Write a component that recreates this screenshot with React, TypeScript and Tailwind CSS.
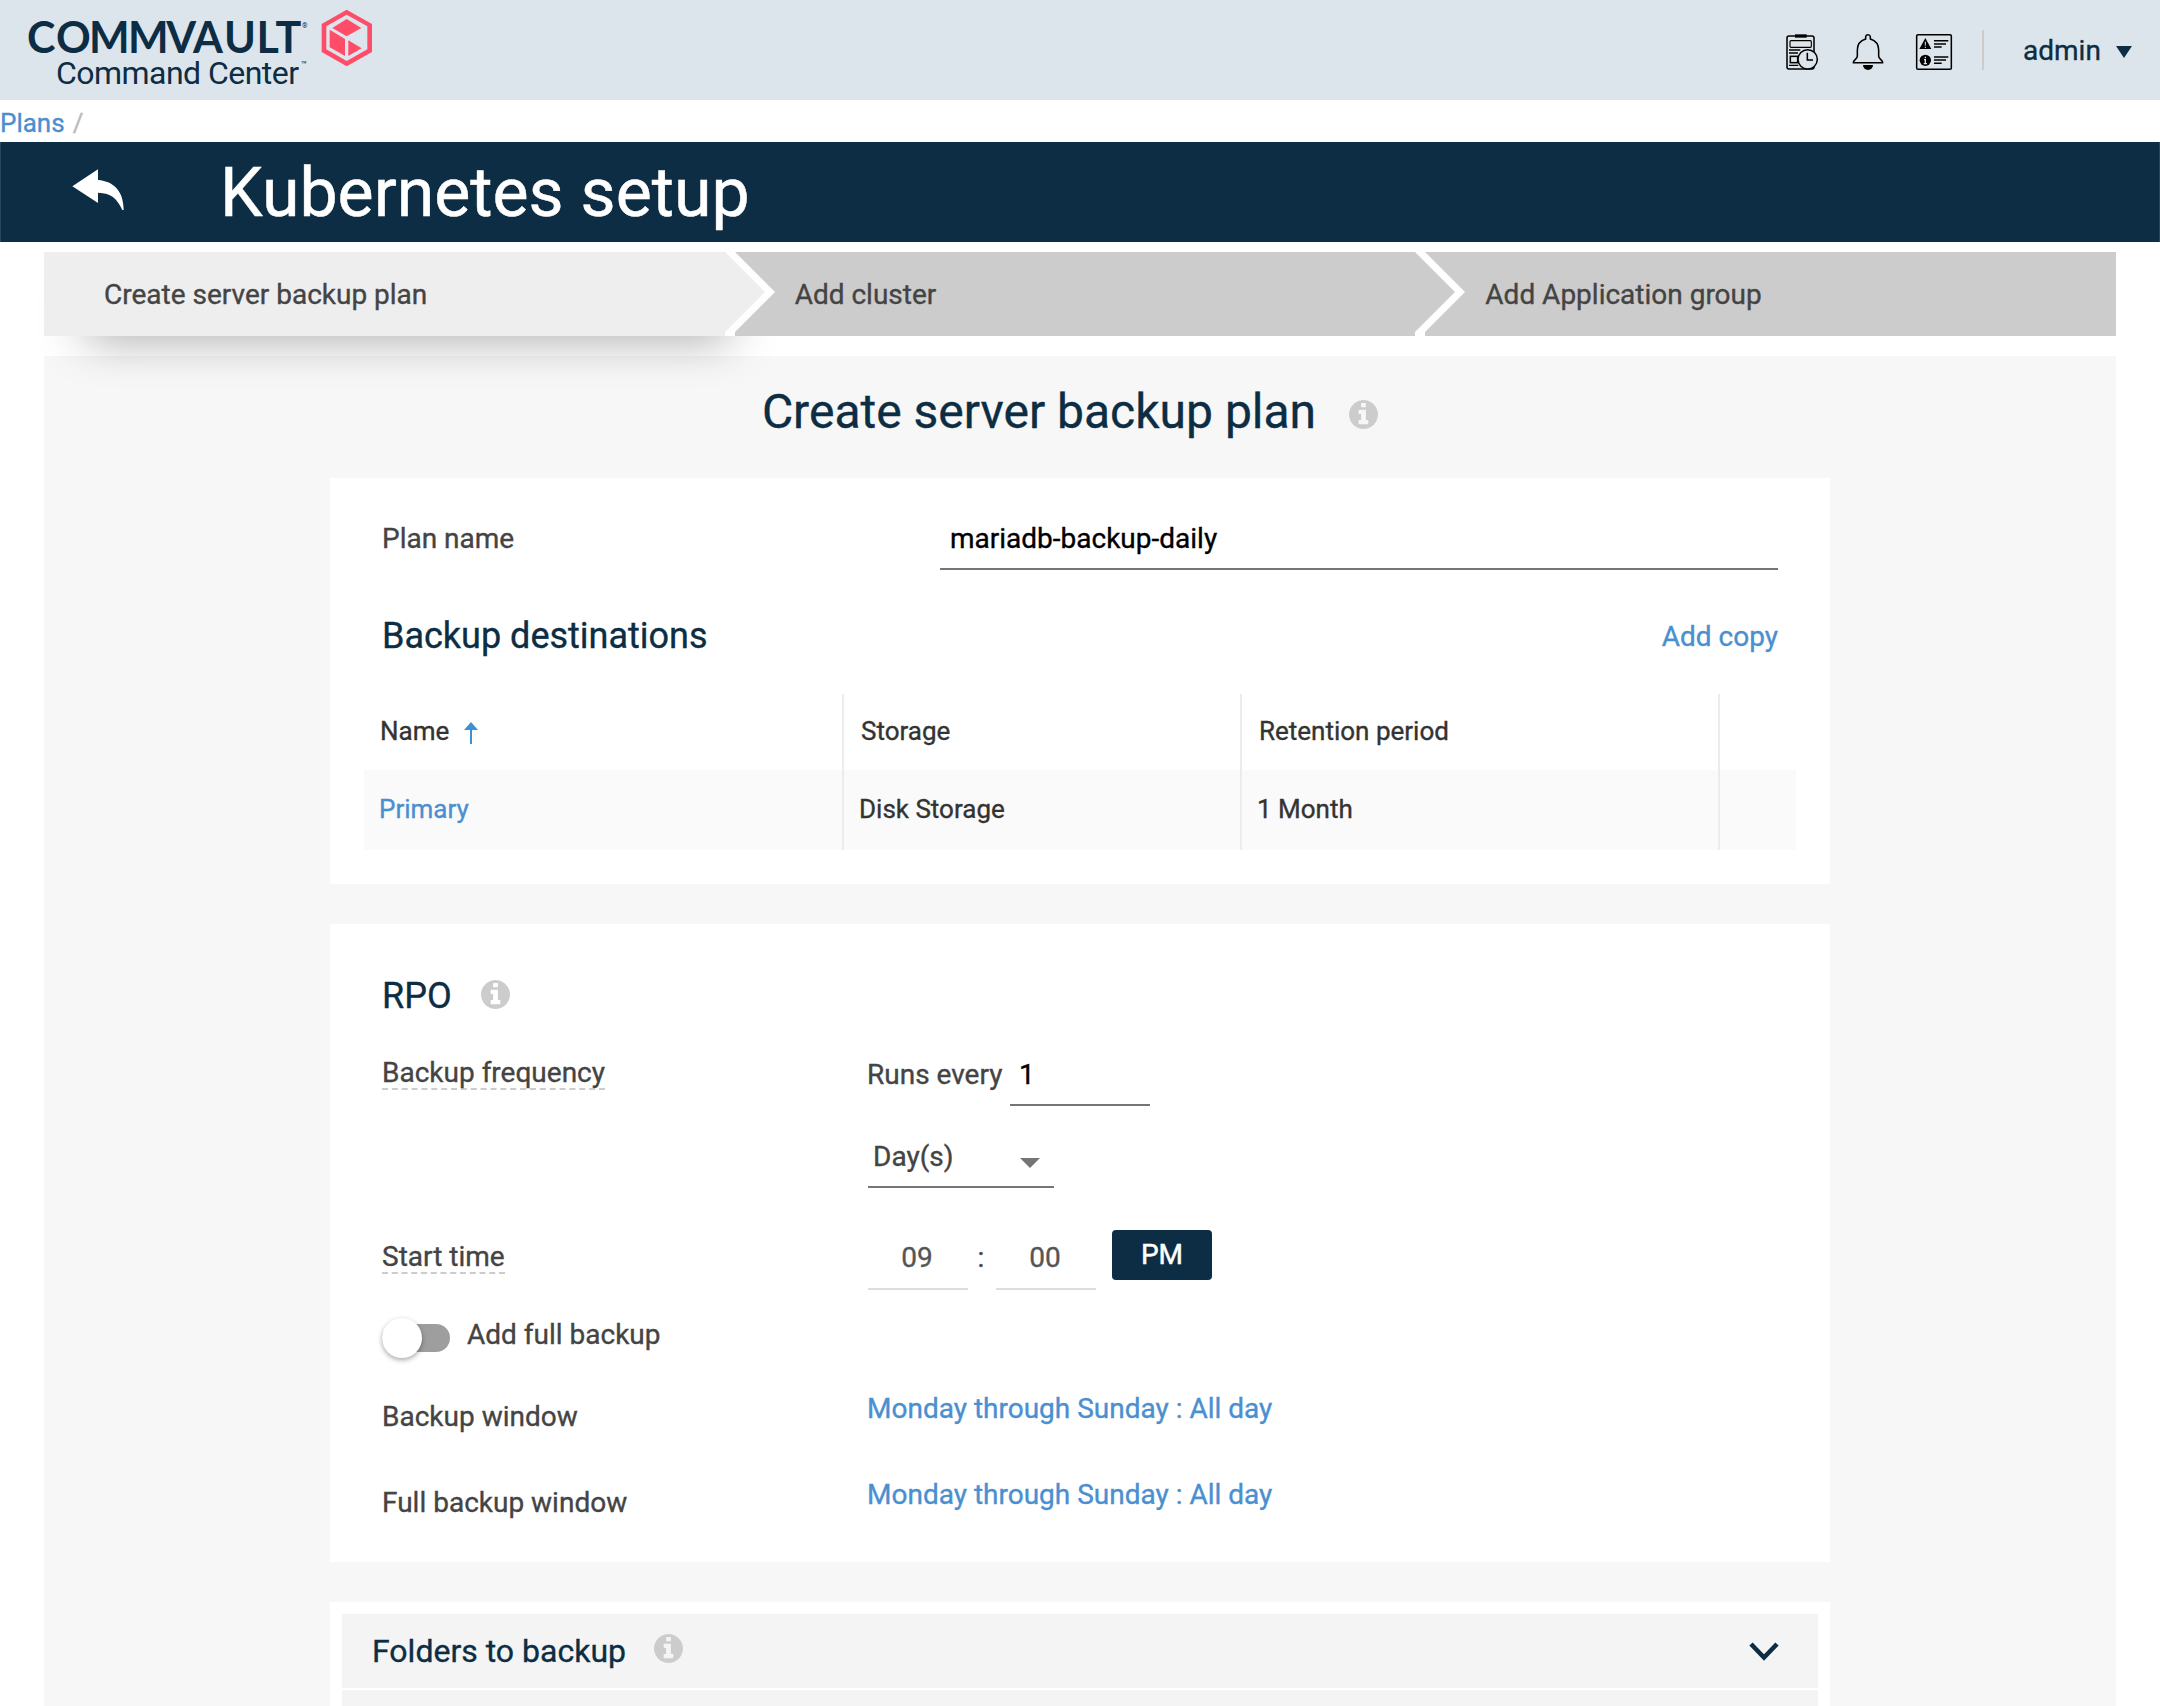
import type { ReactNode } from "react";

function InfoIcon({ className = "" }: { className?: string }) {
  return (
    <svg viewBox="128 128 1536 1536" className={`size-[29px] shrink-0 fill-[#ccc] ${className}`}>
      <path d="M1152 1376v-160q0-14-9-23t-23-9h-96v-512q0-14-9-23t-23-9h-320q-14 0-23 9t-9 23v160q0 14 9 23t23 9h96v320h-96q-14 0-23 9t-9 23v160q0 14 9 23t23 9h448q14 0 23-9t9-23zm-128-896v-160q0-14-9-23t-23-9h-192q-14 0-23 9t-9 23v160q0 14 9 23t23 9h192q14 0 23-9t9-23zm640 416q0 209-103 385.5t-279.5 279.5-385.5 103-385.5-103-279.5-279.5-103-385.5 103-385.5 279.5-279.5 385.5-103 385.5 103 279.5 279.5 103 385.5z" />
    </svg>
  );
}

function Logo() {
  return (
    <svg width="400" height="100" viewBox="0 0 400 100" className="shrink-0">
      <text
        x="27 56 89 128 166.3 193 224 256.5 275.5"
        y="53.2"
        fill="#0c2d43"
        className="font-['Lato'] text-[43px] font-bold"
      >
        COMMVAULT
      </text>
      <text x="302" y="28" fill="#0c2d43" className="font-['Roboto'] text-[7px]">
        ®
      </text>
      <text
        x="56"
        y="83.5"
        textLength="243"
        lengthAdjust="spacing"
        fill="#0c2d43"
        className="font-['Roboto'] text-[32px]"
      >
        Command Center
      </text>
      <text x="301" y="67.5" fill="#0c2d43" className="font-['Roboto'] text-[10px]">
        ™
      </text>
      <g fill="#ff4c69" transform="scale(.33333)">
        <path
          fillRule="evenodd"
          d="M1040 29l76 43v84l-76 43l-75-43V72zM1040 44l-61 35v69l61 35l62-35V79z"
        />
        <path d="M1040 57l44 27l-44 25l-43-25z" />
        <path d="M989 89l46 28v51l-46-26z" />
        <path d="M1045 121l40 24l-40 23z" />
      </g>
    </svg>
  );
}

function JobsIcon() {
  return (
    <svg width="33" height="38" viewBox="78 99 99 114" fill="none" stroke="#000" strokeWidth="4.6">
      <rect x="81" y="108" width="81" height="99" rx="6" />
      <path d="M105 103h35v10h-35z" fill="#000" stroke="none" />
      <rect x="90" y="122" width="64" height="20" rx="3" strokeWidth="3.4" />
      <path d="M87 150h34M87 159h27M87 196h28" strokeWidth="3.8" />
      <rect x="91" y="169" width="22" height="19" />
      <circle cx="143" cy="178" r="29" fill="#dde5ec" />
      <path d="M142 158v22h17" />
    </svg>
  );
}

function BellIcon() {
  return (
    <svg width="32" height="38" viewBox="276 99 96 114" fill="none" stroke="#000" strokeWidth="4.6">
      <path d="M317 117v-7q1-6 7-6t7 6v7c16 5 25 17 25 33v19c0 8 12 10 12 19h-88c0-9 12-11 12-19v-19c0-16 9-28 25-33z" />
      <path d="M309 195h30a15 15 0 0 1-30 0z" fill="#000" stroke="none" />
    </svg>
  );
}

function EventsIcon() {
  return (
    <svg width="38" height="38" viewBox="465 99 114 114" fill="none" stroke="#000" strokeWidth="4.6">
      <rect x="470" y="104" width="104" height="104" rx="4" />
      <path d="M496 114l18 33h-36z" fill="#000" stroke="none" />
      <path d="M496 125v12M496 140v4" stroke="#dde5ec" strokeWidth="3" />
      <circle cx="496" cy="181" r="17" fill="#000" stroke="none" />
      <path d="M496 170v5M492 179h4v12M491 191h10" stroke="#dde5ec" strokeWidth="4" />
      <path d="M522 122h43M522 132h36M522 141h23M522 171h43M522 180h36M522 190h23" />
    </svg>
  );
}

function StepDivider({ className }: { className: string }) {
  return (
    <svg width="52" height="84" viewBox="0 0 52 84" className={`absolute top-0 -left-[10px] ${className}`}>
      <path d="M0 0h10l40 40l-40 40v4H0z" fill="#fff" />
      <path d="M0 0l40 40l-40 40z" fill="currentColor" />
    </svg>
  );
}

function Step({ children, className }: { children: ReactNode; className: string }) {
  return <li className={`relative h-[84px] pt-[26px] pl-[60px] ${className}`}>{children}</li>;
}

const label = "w-[486px] shrink-0";
const hinted = "inline-block h-[34px] border-b-2 border-dashed border-[#ccc]";
const link = "text-[#4a8fd0]";

export default function App() {
  return (
    <div className="flex h-[1706px] w-[2160px] flex-col overflow-hidden bg-white font-['Roboto',sans-serif] text-[28px] leading-[33px] text-[#444] [-webkit-text-stroke:0.35px]">
      <header className="flex h-[100px] shrink-0 justify-between bg-[#dde5ec]">
        <Logo />
        <div className="flex pr-[28px] text-[#0c2d43]">
          <div className="flex pt-[33px]">
            <JobsIcon />
            <div className="mr-[31px] ml-[33px]">
              <BellIcon />
            </div>
            <EventsIcon />
          </div>
          <div className="mt-[30px] ml-[29px] h-[40px] w-[2px] bg-[#ccc]" />
          <span className="mt-[34px] ml-[39px] w-[78px]">admin</span>
          <svg width="16" height="12" viewBox="0 0 16 12" className="mt-[46px] ml-[15px]">
            <path d="M0 0h16l-8 12z" fill="#0c2d43" />
          </svg>
        </div>
      </header>

      <nav className="flex h-[42px] shrink-0 gap-[8px] pt-[8px] text-[26px] leading-[30px]">
        <a className={link}>Plans</a>
        <span className="text-[#bbb]">/</span>
      </nav>

      <div className="flex h-[100px] shrink-0 border-x border-[#29465a] bg-[#0c2d43] text-white">
        <svg width="52" height="42" viewBox="215 507 156 126" className="mt-[27px] ml-[71px]">
          <path d="M216 559l77-51v32c48 4 77 34 77 90h-4c-16-34-32-51-73-52v31z" fill="#fff" />
        </svg>
        <h1 className="mt-[11px] ml-[96px] text-[68px] leading-[80px] [-webkit-text-stroke:0.5px]">Kubernetes setup</h1>
      </div>

      <ol className="relative mx-[44px] mt-[10px] grid shrink-0 grid-cols-3">
        <Step className="bg-[#eee] shadow-[18px_24px_48px_-24px_rgba(0,0,0,0.42)]">Create server backup plan</Step>
        <Step className="bg-[#ccc]">
          <StepDivider className="text-[#eee]" />
          Add cluster
        </Step>
        <Step className="bg-[#ccc]">
          <StepDivider className="text-[#ccc]" />
          Add Application group
        </Step>
      </ol>

      <main className="mx-[44px] mt-[20px] flex flex-1 flex-col items-center bg-[#f7f7f7]">
        <div className="flex h-[122px] shrink-0 pt-[27px] text-[#0c2d43]">
          <h2 className="ml-[-20px] text-[48px] leading-[57px]">Create server backup plan</h2>
          <InfoIcon className="mt-[17px] ml-[33px]" />
        </div>

        <section className="flex h-[406px] w-[1500px] shrink-0 flex-col bg-white px-[34px] pt-[44px]">
          <div className="flex justify-between px-[18px]">
            <span>Plan name</span>
            <div className="h-[48px] w-[838px] border-b-2 border-[#757575] pl-[10px] text-black">mariadb-backup-daily</div>
          </div>
          <div className="mt-[45px] flex justify-between px-[18px]">
            <h3 className="text-[36px] leading-[42px] text-[#0c2d43]">Backup destinations</h3>
            <a className={`mt-[5px] ${link}`}>Add copy</a>
          </div>
          <div className="mt-[37px] grid grid-cols-[478px_398px_478px_78px] text-[26px] leading-[30px] text-[#333]">
            <div className="flex h-[76px] pt-[22px] pl-[16px]">
              Name
              <svg width="14" height="22" viewBox="0 0 14 22" className="mt-[6px] ml-[15px]">
                <path d="M7 0l7 8H8v14H6V8H0z" fill="#3f8fd4" />
              </svg>
            </div>
            <div className="border-l-2 border-[#ececec] pt-[22px] pl-[17px]">Storage</div>
            <div className="border-l-2 border-[#ececec] pt-[22px] pl-[17px]">Retention period</div>
            <div className="border-l-2 border-[#ececec]" />
            <div className={`h-[80px] bg-[#fafafa] pt-[24px] pl-[15px] ${link}`}>Primary</div>
            <div className="border-l-2 border-[#ececec] bg-[#fafafa] pt-[24px] pl-[15px]">Disk Storage</div>
            <div className="border-l-2 border-[#ececec] bg-[#fafafa] pt-[24px] pl-[15px]">1 Month</div>
            <div className="border-l-2 border-[#ececec] bg-[#fafafa]" />
          </div>
        </section>

        <section className="mt-[40px] flex h-[638px] w-[1500px] shrink-0 flex-col bg-white px-[52px] pt-[51px]">
          <div className="flex">
            <h3 className="text-[36px] leading-[42px] text-[#0c2d43]">RPO</h3>
            <InfoIcon className="mt-[5px] ml-[29px]" />
          </div>

          <div className="mt-[39px] flex">
            <div className={label}>
              <span className={hinted}>Backup frequency</span>
            </div>
            <div className="flex flex-col pt-[2px]">
              <div className="flex">
                <span className="w-[142px] -indent-px">Runs every</span>
                <div className="h-[48px] w-[140px] border-b-2 border-[#757575] pl-[9px] text-black">1</div>
              </div>
              <div className="mt-[34px] flex h-[48px] w-[186px] justify-between border-b-2 border-[#757575] pr-[14px] pl-[5px]">
                Day(s)
                <svg width="20" height="10" viewBox="0 0 20 10" className="mt-[18px]">
                  <path d="M0 0h20L10 10z" fill="#757575" />
                </svg>
              </div>
            </div>
          </div>

          <div className="mt-[42px] flex h-[60px]">
            <div className={`pt-[10px] ${label}`}>
              <span className={hinted}>Start time</span>
            </div>
            <div className="mt-[11px] h-[49px] w-[100px] border-b-2 border-[#ddd] pr-[2px] text-center text-[#555]">09</div>
            <span className="w-[28px] pt-[11px] pr-[2px] text-center">:</span>
            <div className="mt-[11px] h-[49px] w-[100px] border-b-2 border-[#ddd] pr-[2px] text-center text-[#555]">00</div>
            <button className="ml-[16px] flex h-[50px] w-[100px] justify-center rounded-[4px] bg-[#0c2d43] pt-[8px] leading-[33px] text-white [-webkit-text-stroke:0.5px]">
              PM
            </button>
          </div>

          <div className="mt-[28px] flex h-[40px]">
            <div className="flex w-[68px] items-center">
              <div className="flex h-[28px] w-full items-center rounded-full bg-[#9e9e9e]">
                <div className="size-[40px] shrink-0 rounded-full bg-white shadow-[0_2px_5px_rgba(0,0,0,0.35)]" />
              </div>
            </div>
            <span className="ml-[17px]">Add full backup</span>
          </div>

          <div className="mt-[34px] flex">
            <span className={`pt-[8px] ${label}`}>Backup window</span>
            <a className={`-indent-px ${link}`}>Monday through Sunday : All day</a>
          </div>
          <div className="mt-[45px] flex">
            <span className={`pt-[8px] ${label}`}>Full backup window</span>
            <a className={`-indent-px ${link}`}>Monday through Sunday : All day</a>
          </div>
        </section>

        <section className="mt-[40px] flex w-[1500px] flex-1 flex-col gap-[2px] bg-white px-[12px] pt-[12px]">
          <div className="flex h-[74px] shrink-0 bg-[#f4f4f4] pt-[18px] pr-[39px] pl-[30px] text-[#0c2d43]">
            <h3 className="text-[32px] leading-[38px]">Folders to backup</h3>
            <InfoIcon className="mt-[2px] ml-[28px]" />
            <svg width="30" height="20" viewBox="0 0 30 20" className="mt-[10px] ml-auto">
              <path d="M2 2l13 13.5L28 2" fill="none" stroke="#0c2d43" strokeWidth="4.6" />
            </svg>
          </div>
          <div className="flex-1 bg-[#f4f4f4]" />
        </section>
      </main>
    </div>
  );
}
